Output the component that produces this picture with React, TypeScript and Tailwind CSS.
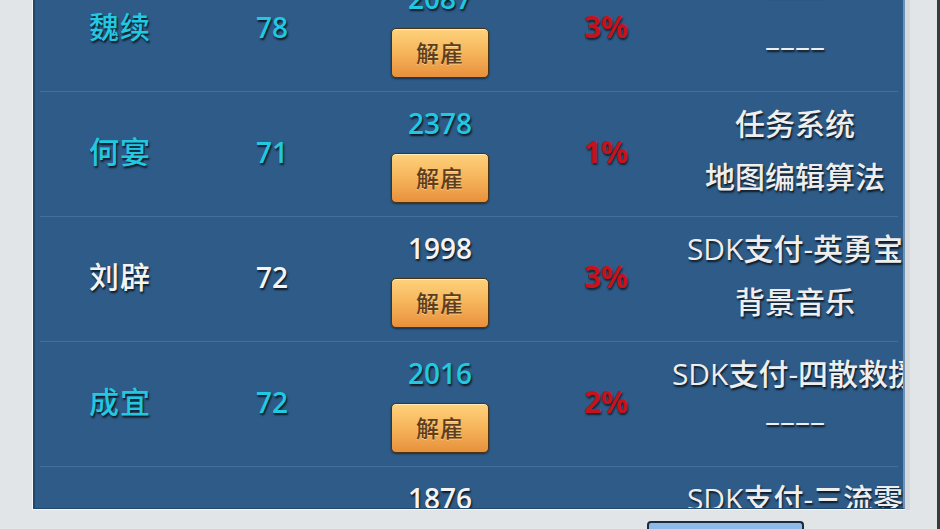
import React from "react";

type Row = {
  name: string;
  level: string;
  salary: string;
  pct: string;
  skills: string[];
  cyan: boolean;
};

const rows: Row[] = [
  { name: "魏续", level: "78", salary: "2087", pct: "3%", skills: ["––––", "––––"], cyan: true },
  { name: "何宴", level: "71", salary: "2378", pct: "1%", skills: ["任务系统", "地图编辑算法"], cyan: true },
  { name: "刘辟", level: "72", salary: "1998", pct: "3%", skills: ["SDK支付-英勇宝", "背景音乐"], cyan: false },
  { name: "成宜", level: "72", salary: "2016", pct: "2%", skills: ["SDK支付-四散救援", "––––"], cyan: true },
  { name: "", level: "", salary: "1876", pct: "", skills: ["SDK支付-三流零", ""], cyan: false },
];

const shadow = "[text-shadow:1px_2px_2px_rgba(0,0,0,0.75)]";

function HireRow({ r }: { r: Row }) {
  const color = r.cyan ? "text-[#22c8e2]" : "text-[#f4f4f4]";
  return (
    <div className="flex h-[124px] shrink-0">
      <div className={`w-[170px] shrink-0 flex items-center justify-center pb-[5px] text-[30px] font-medium tracking-[1px] ${color} ${shadow}`}>
        {r.name}
      </div>
      <div className={`w-[134px] shrink-0 flex items-center justify-center pb-[5px] text-[28px] font-semibold ${color} ${shadow}`}>
        {r.level}
      </div>
      <div className="w-[202px] shrink-0 flex flex-col items-center pt-[13px]">
        <div className={`h-[36px] leading-[36px] text-[28px] font-semibold ${color} ${shadow}`}>{r.salary}</div>
        <button className="mt-[12px] w-[98px] h-[50px] rounded-[5px] border border-[#4a3418] bg-gradient-to-b from-[#fdd27c] via-[#f6b45a] to-[#e8903c] shadow-[inset_0_1px_0_rgba(255,240,200,0.8),0_1px_2px_rgba(0,0,0,0.5)] text-[23px] font-medium text-[#5e3e1e] tracking-[1px] [text-shadow:0_1px_0_rgba(255,230,170,0.6)]">
          解雇
        </button>
      </div>
      <div className="w-[130px] shrink-0 flex items-center justify-center pb-[5px] text-[30px] font-bold text-[#c7121c] [text-shadow:1px_2px_2px_rgba(0,0,0,0.6)]">
        {r.pct}
      </div>
      <div className="w-[248px] shrink-0 flex flex-col items-center pt-[5px] text-[30px] font-medium text-[#eeeeee]">
        {r.skills.map((s, i) => (
          <div
            key={i}
            className={`h-[53px] whitespace-nowrap flex items-center justify-center w-full ${s.startsWith("–") ? "pb-[12px]" : ""} ${shadow}`}
          >
            {s}
          </div>
        ))}
      </div>
    </div>
  );
}

export default function App() {
  return (
    <div
      className="w-[940px] h-[529px] overflow-hidden bg-[#e2e5e8] flex flex-col"
      style={{ fontFamily: "'Open Sans','Noto Sans CJK SC',sans-serif" }}
    >
      <div className="flex h-[510px] shrink-0">
        <div className="w-[32px] shrink-0" />
        <div className="w-[873px] shrink-0 border-l border-b border-[#f4f7fa]">
          <div className="h-full border-l-2 border-b border-r-2 border-l-[#23466b] border-b-[#23466b] border-r-[#6f93b6] bg-[#2e5b87] overflow-hidden">
            <div className="-mt-[33px] flex flex-col">
              {rows.map((r, i) => (
                <React.Fragment key={i}>
                  <HireRow r={r} />
                  {i < rows.length - 1 && <div className="h-px mx-[5px] bg-[#40709c] shrink-0" />}
                </React.Fragment>
              ))}
            </div>
          </div>
        </div>
        <div className="flex-1 flex">
          <div className="w-[5px] bg-[#d6dadd]" />
          <div className="flex-1" />
          <div className="w-[3px] bg-[#3a3a3a]" />
        </div>
      </div>
      <div className="flex-1 flex">
        <div className="w-[647px] shrink-0" />
        <div className="mt-[11px] w-[157px] h-[20px] rounded-t-[4px] border-2 border-b-0 border-[#1d2b3a] bg-[#8dbbe9]" />
        <div className="flex-1" />
        <div className="w-[3px] bg-[#3a3a3a]" />
      </div>
    </div>
  );
}
